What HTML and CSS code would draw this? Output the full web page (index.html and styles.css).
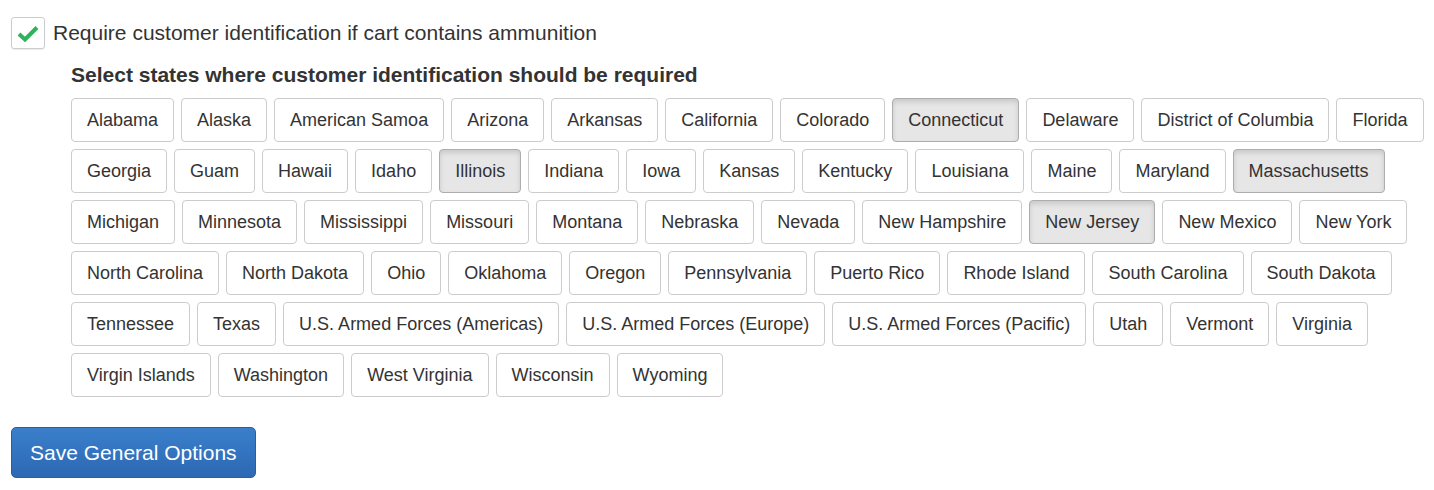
FILE: index.html
```html
<!DOCTYPE html>
<html lang="en">
<head>
    <meta charset="UTF-8">
    <title>General Options</title>
    <link rel="stylesheet" href="styles.css">
</head>
<body>
    <form class="options">
        <!-- Ammunition ID toggle -->
        <label class="check-row">
            <span class="check-box">
                <svg width="22" height="17" viewBox="0 0 22 17"><path d="M2 9 L8 14.5 L20 2.5" fill="none" stroke="#2eb35a" stroke-width="4"/></svg>
            </span>
            <span class="check-text">Require customer identification if cart contains ammunition</span>
        </label>

        <div class="states">
            <h4>Select states where customer identification should be required</h4>
            <div class="state-list">
                <button type="button" class="btn">Alabama</button>
                <button type="button" class="btn">Alaska</button>
                <button type="button" class="btn">American Samoa</button>
                <button type="button" class="btn">Arizona</button>
                <button type="button" class="btn">Arkansas</button>
                <button type="button" class="btn">California</button>
                <button type="button" class="btn">Colorado</button>
                <button type="button" class="btn active">Connecticut</button>
                <button type="button" class="btn">Delaware</button>
                <button type="button" class="btn">District of Columbia</button>
                <button type="button" class="btn">Florida</button>
                <button type="button" class="btn">Georgia</button>
                <button type="button" class="btn">Guam</button>
                <button type="button" class="btn">Hawaii</button>
                <button type="button" class="btn">Idaho</button>
                <button type="button" class="btn active">Illinois</button>
                <button type="button" class="btn">Indiana</button>
                <button type="button" class="btn">Iowa</button>
                <button type="button" class="btn">Kansas</button>
                <button type="button" class="btn">Kentucky</button>
                <button type="button" class="btn">Louisiana</button>
                <button type="button" class="btn">Maine</button>
                <button type="button" class="btn">Maryland</button>
                <button type="button" class="btn active">Massachusetts</button>
                <button type="button" class="btn">Michigan</button>
                <button type="button" class="btn">Minnesota</button>
                <button type="button" class="btn">Mississippi</button>
                <button type="button" class="btn">Missouri</button>
                <button type="button" class="btn">Montana</button>
                <button type="button" class="btn">Nebraska</button>
                <button type="button" class="btn">Nevada</button>
                <button type="button" class="btn">New Hampshire</button>
                <button type="button" class="btn active">New Jersey</button>
                <button type="button" class="btn">New Mexico</button>
                <button type="button" class="btn">New York</button>
                <button type="button" class="btn">North Carolina</button>
                <button type="button" class="btn">North Dakota</button>
                <button type="button" class="btn">Ohio</button>
                <button type="button" class="btn">Oklahoma</button>
                <button type="button" class="btn">Oregon</button>
                <button type="button" class="btn">Pennsylvania</button>
                <button type="button" class="btn">Puerto Rico</button>
                <button type="button" class="btn">Rhode Island</button>
                <button type="button" class="btn">South Carolina</button>
                <button type="button" class="btn">South Dakota</button>
                <button type="button" class="btn">Tennessee</button>
                <button type="button" class="btn">Texas</button>
                <button type="button" class="btn">U.S. Armed Forces (Americas)</button>
                <button type="button" class="btn">U.S. Armed Forces (Europe)</button>
                <button type="button" class="btn">U.S. Armed Forces (Pacific)</button>
                <button type="button" class="btn">Utah</button>
                <button type="button" class="btn">Vermont</button>
                <button type="button" class="btn">Virginia</button>
                <button type="button" class="btn">Virgin Islands</button>
                <button type="button" class="btn">Washington</button>
                <button type="button" class="btn">West Virginia</button>
                <button type="button" class="btn">Wisconsin</button>
                <button type="button" class="btn">Wyoming</button>
            </div>
        </div>

        <button type="submit" class="btn-save">Save General Options</button>
    </form>
</body>
</html>
```

FILE: styles.css
```css
body {
    margin: 0;
    background-color: #fff;
    font-family: 'Liberation Sans', Arial, sans-serif;
    color: #333;
}

.options {
    padding: 17px 0 17px 11px;
}

/* Checkbox row */
.check-row {
    display: flex;
    align-items: center;
    gap: 8px;
    cursor: pointer;
}

.check-box {
    width: 32px;
    height: 30px;
    border: 1px solid #ccc;
    border-radius: 3px;
    display: flex;
    align-items: center;
    justify-content: center;
    box-shadow: 0 1px 1px rgba(0, 0, 0, 0.08);
}

.check-text {
    font-size: 21px;
}

/* State selection */
.states {
    padding-left: 60px;
}

.states h4 {
    font-size: 21px;
    line-height: 26px;
    font-weight: bold;
    margin: 13px 0 10px;
}

.state-list {
    display: flex;
    flex-wrap: wrap;
    gap: 7px;
}

.btn {
    font-family: inherit;
    font-size: 18px;
    line-height: 24px;
    color: #333;
    background-color: #fff;
    border: 1px solid #ccc;
    border-radius: 4px;
    padding: 9px 15px;
    cursor: pointer;
}

.btn.active {
    background-color: #e6e6e6;
    border-color: #adadad;
    box-shadow: inset 0 3px 5px rgba(0, 0, 0, 0.125);
}

/* Save button */
.btn-save {
    margin-top: 30px;
    font-family: inherit;
    font-size: 21px;
    line-height: 27px;
    color: #fff;
    background-image: linear-gradient(to bottom, #3a7fcb 0%, #2d68b3 100%);
    border: 1px solid #2b5e9e;
    border-radius: 5px;
    padding: 11px 18px;
    cursor: pointer;
}
```
